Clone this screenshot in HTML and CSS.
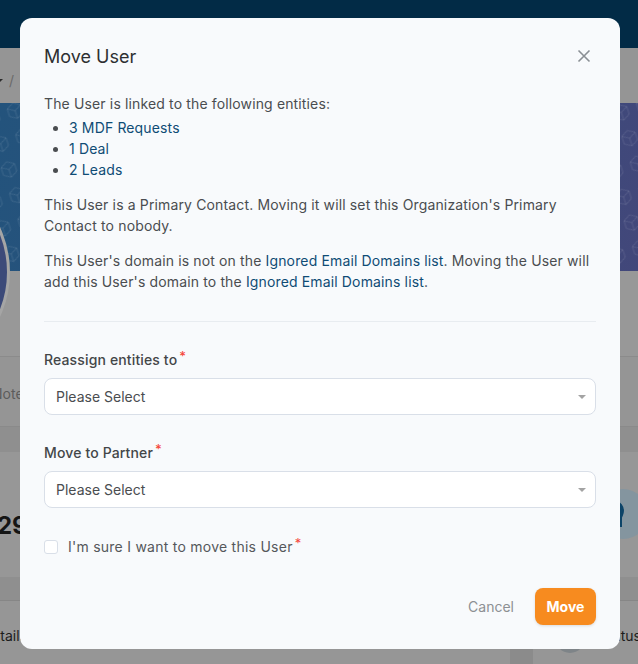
FILE: index.html
```html
<!DOCTYPE html>
<html lang="en">
<head>
<meta charset="utf-8">
<title>Move User</title>
<link rel="stylesheet" href="styles.css">
</head>
<body>
<div class="page">
  <header class="topbar"></header>
  <div class="crumbs"><span class="caret"></span><span class="slash">/</span></div>
  <div class="banner">
    <svg class="cubes" width="638" height="168" aria-hidden="true">
      <defs>
        <pattern id="cube" width="24" height="27" patternUnits="userSpaceOnUse" patternTransform="rotate(-18)">
          <path d="M12 4l7 4v8l-7 4-7-4V8zM5 8l7 4 7-4M12 12v8" fill="none" stroke="#fff" stroke-opacity=".1"/>
        </pattern>
      </defs>
      <rect width="638" height="168" fill="url(#cube)"/>
    </svg>
  </div>
  <div class="profile"></div>
  <div class="tabs"><span class="tab">Notes</span></div>
  <div class="strip"></div>
  <div class="card">
    <span class="stat">29</span>
    <span class="badge">
      <svg width="24" height="30" viewBox="0 0 24 30"><path d="M3 28V21C-1 16 0 4 10 3c8-1 13 6 10 13l-1 2v10" fill="none" stroke="#0c4468" stroke-width="4"/></svg>
    </span>
  </div>
  <div class="strip strip-low"></div>
  <div class="details">
    <span class="detail-left">Details</span>
    <div class="rail"></div>
    <div class="status"><span class="status-dot"></span><span>Status</span></div>
  </div>
</div>
<div class="avatar"></div>

<div class="modal" role="dialog" aria-labelledby="modal-title">
  <div class="modal-head">
    <h2 id="modal-title">Move User</h2>
    <svg class="close" width="14" height="14" viewBox="0 0 14 14" aria-label="Close"><path d="M1.5 1.5l11 11M12.5 1.5l-11 11" stroke="#8a8f94" stroke-width="1.6" fill="none"/></svg>
  </div>
  <div class="intro">
    <p class="lead">The User is linked to the following entities:</p>
    <ul>
      <li><a href="#">3 MDF Requests</a></li>
      <li><a href="#">1 Deal</a></li>
      <li><a href="#">2 Leads</a></li>
    </ul>
    <p>This User is a Primary Contact. Moving it will set this Organization's Primary Contact to nobody.</p>
    <p>This User's domain is not on the <a href="#">Ignored Email Domains list</a>. Moving the User will add this User's domain to the <a href="#">Ignored Email Domains list</a>.</p>
  </div>
  <hr>
  <div class="field">
    <label>Reassign entities to<sup>*</sup></label>
    <div class="select"><span>Please Select</span><i class="arrow"></i></div>
  </div>
  <div class="field">
    <label>Move to Partner<sup>*</sup></label>
    <div class="select"><span>Please Select</span><i class="arrow"></i></div>
  </div>
  <div class="check"><span class="box"></span><span class="check-text">I'm sure I want to move this User<sup>*</sup></span></div>
  <div class="actions">
    <button class="cancel" type="button">Cancel</button>
    <button class="move" type="button">Move</button>
  </div>
</div>
</body>
</html>
```
FILE: styles.css
```css
* { box-sizing: border-box; }
html, body { margin: 0; height: 100%; }
body {
  width: 638px;
  height: 664px;
  overflow: hidden;
  position: relative;
  background: #959595;
  font-family: Inter, "Noto Sans", sans-serif;
  font-size: 14px;
  color: #4a4d50;
}
.page { height: 664px; overflow: hidden; display: flex; flex-direction: column; }
.topbar { height: 48px; background: #022b46; flex: none; }
.crumbs { height: 55px; flex: none; display: flex; align-items: center; gap: 6px; padding-top: 9px; color: #6a6a6a; }
.caret { width: 0; height: 0; margin-left: -3px; border: 3px solid transparent; border-top: 3px solid #2b2b2b; border-bottom: 0; }
.slash { font-size: 14px; }
.banner { height: 168px; flex: none; position: relative; background: linear-gradient(100deg, #23537c 0%, #344f7c 60%, #42477a 100%); }
.cubes { position: absolute; inset: 0; }
.avatar { position: absolute; left: -202px; top: 166px; width: 212px; height: 212px; border-radius: 50%; background: #3c4a79; border: 3px solid #a5a5a5; }
.profile { height: 86px; flex: none; background: #989898; border-bottom: 1px solid #8b8b8b; }
.tabs { height: 70px; flex: none; background: #959595; border-bottom: 1px solid #8a8a8a; display: flex; align-items: flex-start; padding-top: 28px; color: #5c5c5c; }
.tab { margin-left: -8px; }
.strip { height: 25px; flex: none; background: #8f8f8f; }
.strip-low { height: 24px; border-bottom: 1px solid #868686; }
.card { height: 125px; flex: none; background: #979797; display: flex; align-items: center; justify-content: space-between; }
.stat { margin-left: -3px; padding-top: 22px; font-size: 24px; font-weight: 700; color: #151515; }
.badge { width: 50px; height: 50px; margin-right: -10px; margin-top: -2px; border-radius: 50%; background: #84959f; display: flex; align-items: center; padding-left: 3px; overflow: hidden; }
.details { flex: 1; display: flex; background: #969696; color: #1c1c1c; }
.detail-left { margin-left: -18px; padding-top: 26px; flex: 1; }
.rail { width: 23px; background: #8b8b8b; }
.status { width: 105px; position: relative; display: flex; justify-content: flex-end; padding-top: 26px; }
.status span:last-child { margin-right: -3px; }
.status-dot { position: absolute; left: 22px; top: 22px; width: 30px; height: 30px; border-radius: 50%; background: #7e8488; }

.modal {
  position: absolute;
  left: 20px;
  top: 18px;
  width: 600px;
  height: 631px;
  background: #f8fafc;
  border-radius: 12px;
  padding: 24px;
  display: flex;
  flex-direction: column;
  line-height: 21px;
  letter-spacing: .14px;
}
.modal-head { display: flex; justify-content: space-between; align-items: center; height: 28px; }
.modal-head h2 { margin: 0; font-size: 18px; font-weight: 400; color: #2d2f31; letter-spacing: 0; }
.close { margin-right: 5px; }
.intro { margin-top: 23px; }
.intro p { margin: 0 0 14px; }
.intro .lead { margin: 0 0 3px; }
.intro ul { margin: 0 0 14px; padding-left: 25px; }
.intro li::marker { color: #4a4d50; }
.intro a { color: #0f4c75; text-decoration: none; }
hr { border: 0; border-top: 1px solid #e8ecf0; margin: 15px 0 0; width: 100%; }
.field { margin-top: 28px; }
label { display: block; font-weight: 500; color: #434648; height: 28px; line-height: 20px; }
sup { color: #f5483b; font-size: 13px; line-height: 0; margin-left: 2px; vertical-align: 4px; }
.select { height: 37px; background: #fff; border: 1px solid #d9dfe8; border-radius: 8px; display: flex; align-items: center; justify-content: space-between; padding: 0 9px 0 11px; color: #4a4d50; letter-spacing: 0; }
.arrow { width: 0; height: 0; border: 4px solid transparent; border-top: 4px solid #a3a3a3; border-bottom: 0; }
.check { display: flex; align-items: center; gap: 10px; margin-top: 28px; color: #55585b; }
.check-text { letter-spacing: .25px; }
.box { width: 14px; height: 14px; background: #fff; border: 1px solid #d9dfe8; border-radius: 3px; }
.actions { margin-top: auto; display: flex; justify-content: flex-end; align-items: center; gap: 21px; letter-spacing: 0; }
.actions button { font: inherit; border: 0; padding: 0; background: none; }
.cancel { color: #8d9093; }
.actions .move { width: 61px; height: 37px; background: #f78b1f; color: #fff; font-weight: 700; border-radius: 8px; box-shadow: 0 1px 3px rgba(0,0,0,.12); }
```
